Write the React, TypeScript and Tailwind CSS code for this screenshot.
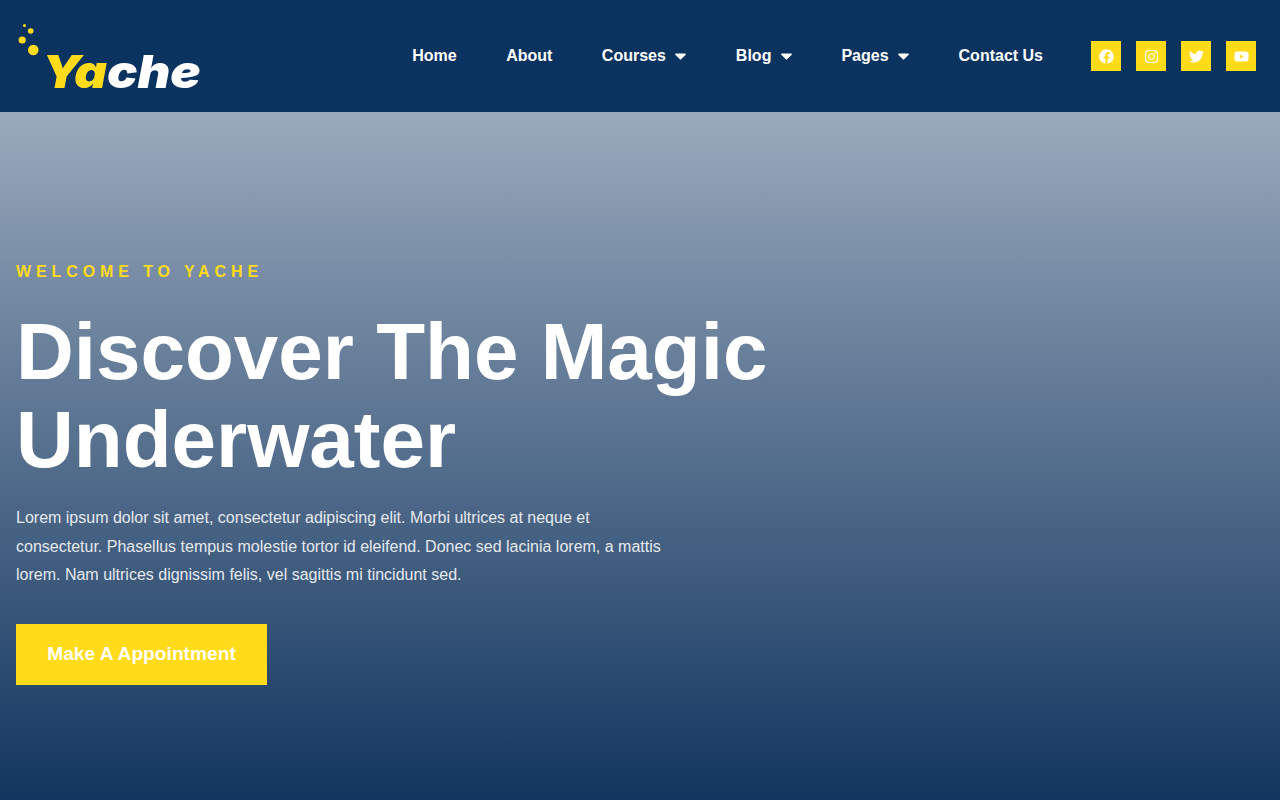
import { FaFacebook, FaInstagram, FaTwitter, FaYoutube } from "react-icons/fa";

const links = [
  { label: "Home" },
  { label: "About" },
  { label: "Courses", caret: true },
  { label: "Blog", caret: true },
  { label: "Pages", caret: true },
  { label: "Contact Us" },
];

const socials = [FaFacebook, FaInstagram, FaTwitter, FaYoutube];

function Caret() {
  return (
    <svg width="11" height="7" viewBox="0 0 11 7">
      <path d="M.8.6h9.4c.6 0 .9.7.5 1.1L5.9 6.4c-.2.2-.6.2-.8 0L.3 1.7C-.1 1.3.2.6.8.6z" fill="#fff" />
    </svg>
  );
}

function Logo() {
  return (
    <div className="relative w-[200px] h-[80px]">
      {/* bubbles */}
      <svg className="absolute left-0 top-0" width="40" height="60" viewBox="0 0 40 60">
        <circle cx="24.5" cy="25.5" r="1.5" fill="#ffdb1a" />
        <circle cx="30.7" cy="31" r="2.8" fill="#ffdb1a" />
        <circle cx="22.2" cy="40" r="3.6" fill="#ffdb1a" />
        <circle cx="33.3" cy="50" r="5.3" fill="#ffdb1a" />
      </svg>
      <span className="absolute left-[42px] top-[45px] origin-left scale-x-[1.1] text-[46px] leading-[52px] font-black italic font-['Inter',sans-serif] text-white">
        <span className="text-[#ffdb1a]">Ya</span>che
      </span>
    </div>
  );
}

export default function App() {
  return (
    <div className="w-full h-[800px] overflow-hidden font-['Liberation_Sans',Arial,sans-serif] text-white">
      <header className="h-[112px] bg-[#0b335f] flex items-start pr-6">
        <Logo />
        <nav className="ml-auto flex items-center h-[112px] gap-[49.5px] font-bold text-base">
          {links.map((l) => (
            <a key={l.label} className="flex items-center gap-[9.5px]">
              {l.label}
              {l.caret && <Caret />}
            </a>
          ))}
        </nav>
        <div className="ml-12 flex items-center h-[112px] gap-[15px]">
          {socials.map((Icon, i) => (
            <div key={i} className="w-[30px] h-[30px] bg-[#ffdb1a] flex items-center justify-center">
              <Icon className="text-[15px] text-white" />
            </div>
          ))}
        </div>
      </header>

      <section className="h-[688px] bg-gradient-to-b from-[#9aaabc] to-[#12365f] px-4 pt-[150px]">
        <p className="text-base leading-5 font-bold tracking-[4.9px] text-[#ffdb1a]">WELCOME TO YACHE</p>
        <h1 className="mt-[26px] text-[80px] leading-[88px] font-bold">
          Discover The Magic
          <br />
          Underwater
        </h1>
        <p className="mt-5 w-[660px] text-base leading-[28.5px] text-[#e6e9ee]">
          Lorem ipsum dolor sit amet, consectetur adipiscing elit. Morbi ultrices at neque et consectetur. Phasellus
          tempus molestie tortor id eleifend. Donec sed lacinia lorem, a mattis lorem. Nam ultrices dignissim felis, vel
          sagittis mi tincidunt sed.
        </p>
        <a className="mt-[34px] flex items-center justify-center w-[251px] h-[61px] bg-[#ffdb1a] text-[19.2px] font-bold">
          Make A Appointment
        </a>
      </section>
    </div>
  );
}
